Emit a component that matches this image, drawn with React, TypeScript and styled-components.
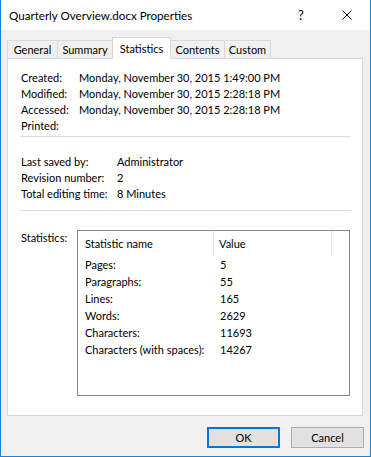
import React from "react";
import styled, { createGlobalStyle } from "styled-components";

const GlobalStyle = createGlobalStyle`
  html, body { margin: 0; padding: 0; background: #fff; }
  body {
    font-family: Lato, "Liberation Sans", sans-serif;
    font-size: 11px;
    color: #000;
  }
  * { box-sizing: border-box; }
`;

const Window = styled.div`
  width: 371px;
  height: 457px;
  border: 1px solid #1883d7;
  border-top: none;
  background: #f0f0f0;
  display: flex;
  flex-direction: column;
`;

const TitleBar = styled.div`
  height: 30px;
  background: #fff;
  display: flex;
  align-items: center;
  padding-left: 8px;
`;

const Title = styled.div`
  flex: 1;
  font-size: 11.6px;
`;

const TitleButton = styled.div`
  width: 46px;
  height: 30px;
  display: flex;
  align-items: center;
  justify-content: center;
  font-size: 13px;
`;

const Body = styled.div`
  padding: 7px 7px 0 6px;
  display: flex;
  flex-direction: column;
`;

const TabRow = styled.div`
  height: 21px;
  display: flex;
  align-items: flex-end;
  position: relative;
  z-index: 1;
`;

const Tab = styled.div<{ $w: number; $active?: boolean }>`
  width: ${(p) => p.$w}px;
  height: ${(p) => (p.$active ? 22 : 18)}px;
  margin-bottom: ${(p) => (p.$active ? -1 : 0)}px;
  margin-left: -1px;
  &:first-child { margin-left: 0; }
  border: 1px solid #d9d9d9;
  border-bottom: none;
  background: ${(p) => (p.$active ? "#fff" : "#f0f0f0")};
  display: flex;
  justify-content: center;
  align-items: ${(p) => (p.$active ? "flex-start" : "center")};
  padding-top: ${(p) => (p.$active ? 3 : 0)}px;
  position: relative;
  z-index: ${(p) => (p.$active ? 2 : 1)};
  line-height: 16px;
`;

const Panel = styled.div`
  height: 358px;
  background: #fff;
  border: 1px solid #d9d9d9;
  padding: 11px 11px 0 12px;
  display: flex;
  flex-direction: column;
`;

const InfoGrid = styled.div<{ $label: number; $top?: number }>`
  display: grid;
  grid-template-columns: ${(p) => p.$label}px 1fr;
  grid-auto-rows: 16px;
  line-height: 16px;
  padding-left: 1px;
  margin-top: ${(p) => p.$top ?? 0}px;
`;

const Separator = styled.div<{ $top: number }>`
  height: 1px;
  background: #dadada;
  margin-top: ${(p) => p.$top}px;
`;

const StatsSection = styled.div`
  margin-top: 19px;
  display: flex;
  align-items: flex-start;
`;

const StatsLabel = styled.div`
  width: 57px;
  padding-left: 1px;
  line-height: 16px;
`;

const ListBox = styled.div`
  width: 273px;
  height: 166px;
  border: 1px solid #828790;
  background: #fff;
`;

const ListRow = styled.div<{ $header?: boolean }>`
  display: grid;
  grid-template-columns: 136px 118px;
  height: ${(p) => (p.$header ? 25 : 17)}px;
  line-height: ${(p) => (p.$header ? 25 : 17)}px;
`;

const Cell = styled.div<{ $pad: number; $divider?: boolean }>`
  padding-left: ${(p) => p.$pad}px;
  border-right: ${(p) => (p.$divider ? "1px solid #e5e5e5" : "none")};
  white-space: nowrap;
`;

const Footer = styled.div`
  display: flex;
  justify-content: flex-end;
  gap: 11px;
  padding: 11px 6px 8px 6px;
`;

const Button = styled.button<{ $default?: boolean }>`
  width: 73px;
  height: 21px;
  background: #e1e1e1;
  border: ${(p) => (p.$default ? "2px solid #0078d7" : "1px solid #adadad")};
  font-family: inherit;
  font-size: 11px;
  color: #000;
  padding: 0;
  margin: 0;
`;

const info1: [string, string][] = [
  ["Created:", "Monday, November 30, 2015 1:49:00 PM"],
  ["Modified:", "Monday, November 30, 2015 2:28:18 PM"],
  ["Accessed:", "Monday, November 30, 2015 2:28:18 PM"],
  ["Printed:", ""],
];

const info2: [string, string][] = [
  ["Last saved by:", "Administrator"],
  ["Revision number:", "2"],
  ["Total editing time:", "8 Minutes"],
];

const stats: [string, string][] = [
  ["Pages:", "5"],
  ["Paragraphs:", "55"],
  ["Lines:", "165"],
  ["Words:", "2629"],
  ["Characters:", "11693"],
  ["Characters (with spaces):", "14267"],
];

const tabs: [string, number][] = [
  ["General", 51],
  ["Summary", 56],
  ["Statistics", 59],
  ["Contents", 55],
  ["Custom", 47],
];

export default function App() {
  return (
    <>
      <GlobalStyle />
      <Window>
        <TitleBar>
          <Title>Quarterly Overview.docx Properties</Title>
          <TitleButton>?</TitleButton>
          <TitleButton>
            <svg width="10" height="10" viewBox="0 0 10 10">
              <path d="M0.5 0.5 L9.5 9.5 M9.5 0.5 L0.5 9.5" stroke="#000" strokeWidth="1" fill="none" />
            </svg>
          </TitleButton>
        </TitleBar>
        <Body>
          <TabRow>
            {tabs.map(([name, w]) => (
              <Tab key={name} $w={w} $active={name === "Statistics"}>
                {name}
              </Tab>
            ))}
          </TabRow>
          <Panel>
            <InfoGrid $label={58}>
              {info1.map(([k, v]) => (
                <React.Fragment key={k}>
                  <div>{k}</div>
                  <div>{v}</div>
                </React.Fragment>
              ))}
            </InfoGrid>
            <Separator $top={2} />
            <InfoGrid $label={96} $top={17}>
              {info2.map(([k, v]) => (
                <React.Fragment key={k}>
                  <div>{k}</div>
                  <div>{v}</div>
                </React.Fragment>
              ))}
            </InfoGrid>
            <Separator $top={8} />
            <StatsSection>
              <StatsLabel>Statistics:</StatsLabel>
              <ListBox>
                <ListRow $header>
                  <Cell $pad={7} $divider>Statistic name</Cell>
                  <Cell $pad={5} $divider>Value</Cell>
                </ListRow>
                {stats.map(([k, v]) => (
                  <ListRow key={k}>
                    <Cell $pad={7}>{k}</Cell>
                    <Cell $pad={6}>{v}</Cell>
                  </ListRow>
                ))}
              </ListBox>
            </StatsSection>
          </Panel>
        </Body>
        <Footer>
          <Button $default>OK</Button>
          <Button>Cancel</Button>
        </Footer>
      </Window>
    </>
  );
}
